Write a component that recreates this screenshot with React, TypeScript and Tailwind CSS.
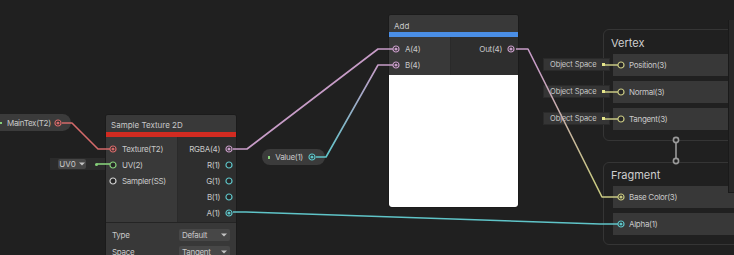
import React from 'react';

// port colours by slot type
const RED = '#d46a6a';
const PINK = '#c79cc7';
const CYAN = '#5fc4c8';
const GREEN = '#86d07a';
const YELLOW = '#c8c882';

function Port({ color, filled }: { color: string; filled?: boolean }) {
  return (
    <svg width="8" height="8" viewBox="0 0 8 8" className="shrink-0">
      <circle cx="4" cy="4" r="3" fill="#262626" stroke={color} strokeWidth="1.2" />
      {filled && <circle cx="4" cy="4" r="1.6" fill={color} />}
    </svg>
  );
}

function Arrow() {
  return (
    <svg width="6" height="4" viewBox="0 0 6 4" className="shrink-0">
      <path d="M0 0.5 H6 L3 3.5 Z" fill="#c4c4c4" />
    </svg>
  );
}

function InRow({ label, color, filled }: { label: string; color: string; filled?: boolean }) {
  return (
    <div className="h-[16px] flex items-center gap-[5px] pl-[3px]">
      <Port color={color} filled={filled} />
      <span>{label}</span>
    </div>
  );
}

function OutRow({ label, color, filled }: { label: string; color: string; filled?: boolean }) {
  return (
    <div className="h-[16px] flex items-center justify-end gap-[5px] pr-[3px]">
      <span>{label}</span>
      <Port color={color} filled={filled} />
    </div>
  );
}

function StackRow({ label, color, filled }: { label: string; color: string; filled?: boolean }) {
  return (
    <div className="h-[22px] flex items-center gap-[4px] pl-[4px] bg-[#383838] text-[8px] tracking-[-0.3px] text-[#c8c8c8]">
      <Port color={color} filled={filled} />
      <span>{label}</span>
    </div>
  );
}

function SpaceBox({ top }: { top: string }) {
  return (
    <div className={`absolute left-[543px] ${top} w-[67px] h-[13px] bg-[#353535] border border-[#2a2a2a] flex items-center pl-[6px] text-[7.5px] tracking-[-0.1px] text-[#c8c8c8]`}>
      Object Space
      <span className="ml-auto mr-[4px] w-[3px] h-[3px] bg-[#e6e68a]" />
    </div>
  );
}

export default function App() {
  return (
    <div className="relative w-[734px] h-[255px] overflow-hidden bg-[#202020] font-[Inter,'Noto_Sans',sans-serif] text-[#c8c8c8]">
      {/* MainTex property */}
      <div className="absolute left-[-20px] top-[114px] w-[91px] h-[17px] rounded-r-full bg-[#3b3b3b] flex items-center pl-[27px] text-[8px] tracking-[-0.3px]">
        <span>MainTex(T2)</span>
        <span className="ml-auto mr-[9px]"><Port color={RED} filled /></span>
      </div>
      <div className="absolute left-0 top-[122px] w-[2px] h-[2px] bg-[#86d07a]" />

      {/* UV0 */}
      <div className="absolute left-[50px] top-[158px] w-[55px] h-[12px] bg-[#2b2b2b] flex items-center pl-[8px]">
        <div className="h-[10px] w-[28px] bg-[#464646] rounded-[2px] flex items-center justify-center gap-[3px] text-[8px]">
          UV0 <Arrow />
        </div>
        <span className="ml-auto mr-[7px] w-[3px] h-[3px] rounded-full bg-[#86d07a]" />
      </div>

      {/* Sample Texture 2D */}
      <div className="absolute left-[105px] top-[114px] w-[132px] h-[150px] bg-[#2e2e2e] border border-[#1b1b1b] rounded-t-[3px] overflow-hidden text-[8px] tracking-[-0.3px]">
        <div className="h-[17px] bg-[#393939] flex items-center pt-[3px] px-[5px] text-[8px] tracking-normal">Sample Texture 2D</div>
        <div className="h-[5px] bg-[#d22b21]" />
        <div className="flex h-[85px]">
          <div className="w-[72px] bg-[#393939] pt-[4px] border-r border-[#2a2a2a]">
            <InRow label="Texture(T2)" color={RED} filled />
            <InRow label="UV(2)" color={GREEN} />
            <InRow label="Sampler(SS)" color="#cfcfcf" />
          </div>
          <div className="flex-1 bg-[#2e2e2e] pt-[4px]">
            <OutRow label="RGBA(4)" color={PINK} filled />
            <OutRow label="R(1)" color={CYAN} />
            <OutRow label="G(1)" color={CYAN} />
            <OutRow label="B(1)" color={CYAN} />
            <OutRow label="A(1)" color={CYAN} filled />
          </div>
        </div>
        <div className="border-t border-[#242424] bg-[#383838] pt-[3px] px-[6px]">
          <div className="h-[17px] flex items-center justify-between">
            <span>Type</span>
            <div className="w-[51px] h-[12px] bg-[#474747] rounded-[2px] flex items-center px-[3px] justify-between">
              Default <Arrow />
            </div>
          </div>
          <div className="h-[17px] flex items-center justify-between">
            <span>Space</span>
            <div className="w-[51px] h-[12px] bg-[#474747] rounded-[2px] flex items-center px-[3px] justify-between">
              Tangent <Arrow />
            </div>
          </div>
        </div>
      </div>

      {/* Value(1) */}
      <div className="absolute left-[262px] top-[149px] w-[63px] h-[16px] rounded-full bg-[#3b3b3b] flex items-center pl-[6px] gap-[5px] text-[8px] tracking-[-0.3px]">
        <span className="w-[3px] h-[3px] bg-[#86d07a]" />
        <span>Value(1)</span>
        <span className="ml-auto mr-[9px]"><Port color={CYAN} filled /></span>
      </div>

      {/* Add */}
      <div className="absolute left-[388px] top-[14px] w-[131px] h-[194px] bg-[#2e2e2e] border border-[#1b1b1b] rounded-[3px] overflow-hidden text-[8px] tracking-[-0.3px] flex flex-col">
        <div className="h-[17px] bg-[#393939] flex items-center pt-[4px] px-[5px] tracking-normal">Add</div>
        <div className="h-[5px] bg-[#4a8ee6]" />
        <div className="flex h-[38px]">
          <div className="w-[62px] bg-[#393939] pt-[4px] border-r border-[#2a2a2a]">
            <InRow label="A(4)" color={PINK} filled />
            <InRow label="B(4)" color={PINK} filled />
          </div>
          <div className="flex-1 pt-[4px]">
            <OutRow label="Out(4)" color={PINK} filled />
          </div>
        </div>
        <div className="flex-1 bg-white rounded-b-[3px]" />
      </div>

      {/* Vertex stack */}
      <div className="absolute left-[603px] top-[29px] w-[150px] h-[112px] border border-[#353535] rounded-[6px] pl-[9px]">
        <div className="h-[24px] flex items-center pt-[3px] -ml-[2px] text-[11px] text-[#cfcfcf]">Vertex</div>
        <div className="flex flex-col gap-[5px]">
          <StackRow label="Position(3)" color={YELLOW} />
          <StackRow label="Normal(3)" color={YELLOW} />
          <StackRow label="Tangent(3)" color={YELLOW} />
        </div>
      </div>
      <SpaceBox top="top-[58px]" />
      <SpaceBox top="top-[85px]" />
      <SpaceBox top="top-[112px]" />

      {/* Fragment stack */}
      <div className="absolute left-[603px] top-[162px] w-[150px] h-[83px] border border-[#353535] rounded-[6px] pl-[9px]">
        <div className="h-[23px] flex items-center pt-[1px] -ml-[2px] text-[11px] text-[#cfcfcf]">Fragment</div>
        <div className="flex flex-col gap-[5px]">
          <StackRow label="Base Color(3)" color={YELLOW} filled />
          <StackRow label="Alpha(1)" color={CYAN} filled />
        </div>
      </div>

      {/* side panel edge */}
      <div className="absolute left-[728px] top-[20px] w-[10px] h-[173px] bg-[#282828] border-l border-b border-[#1a1a1a]" />

      {/* edges */}
      <svg width="734" height="255" className="absolute left-0 top-0 pointer-events-none">
        <defs>
          <linearGradient id="gB" gradientUnits="userSpaceOnUse" x1="0" y1="157" x2="0" y2="65">
            <stop offset="0" stopColor={CYAN} />
            <stop offset="1" stopColor={PINK} />
          </linearGradient>
          <linearGradient id="gOut" gradientUnits="userSpaceOnUse" x1="0" y1="49" x2="0" y2="197">
            <stop offset="0.1" stopColor={PINK} />
            <stop offset="0.9" stopColor={YELLOW} />
          </linearGradient>
        </defs>
        <g fill="none" strokeWidth="1.6" strokeLinejoin="round">
          <path d="M62 123 H72 L98 149 H110" stroke={RED} />
          <path d="M97 164 H110" stroke={GREEN} />
          <path d="M233 149 H247 L378 49 H393" stroke={PINK} />
          <path d="M316 157 H326 L378 65 H393" stroke="url(#gB)" />
          <path d="M516 49 H528 L602 197 H618" stroke="url(#gOut)" />
          <path d="M233 212 H246 L600 224 H618" stroke={CYAN} />
          <path d="M605 65 H618 M605 92 H618 M605 119 H618" stroke={YELLOW} />
          <path d="M676 143 L676 158" stroke="#9a9a9a" />
          <circle cx="676" cy="140" r="2.6" stroke="#9a9a9a" fill="#202020" />
          <circle cx="676" cy="161" r="2.6" stroke="#9a9a9a" fill="#202020" />
        </g>
      </svg>
    </div>
  );
}
